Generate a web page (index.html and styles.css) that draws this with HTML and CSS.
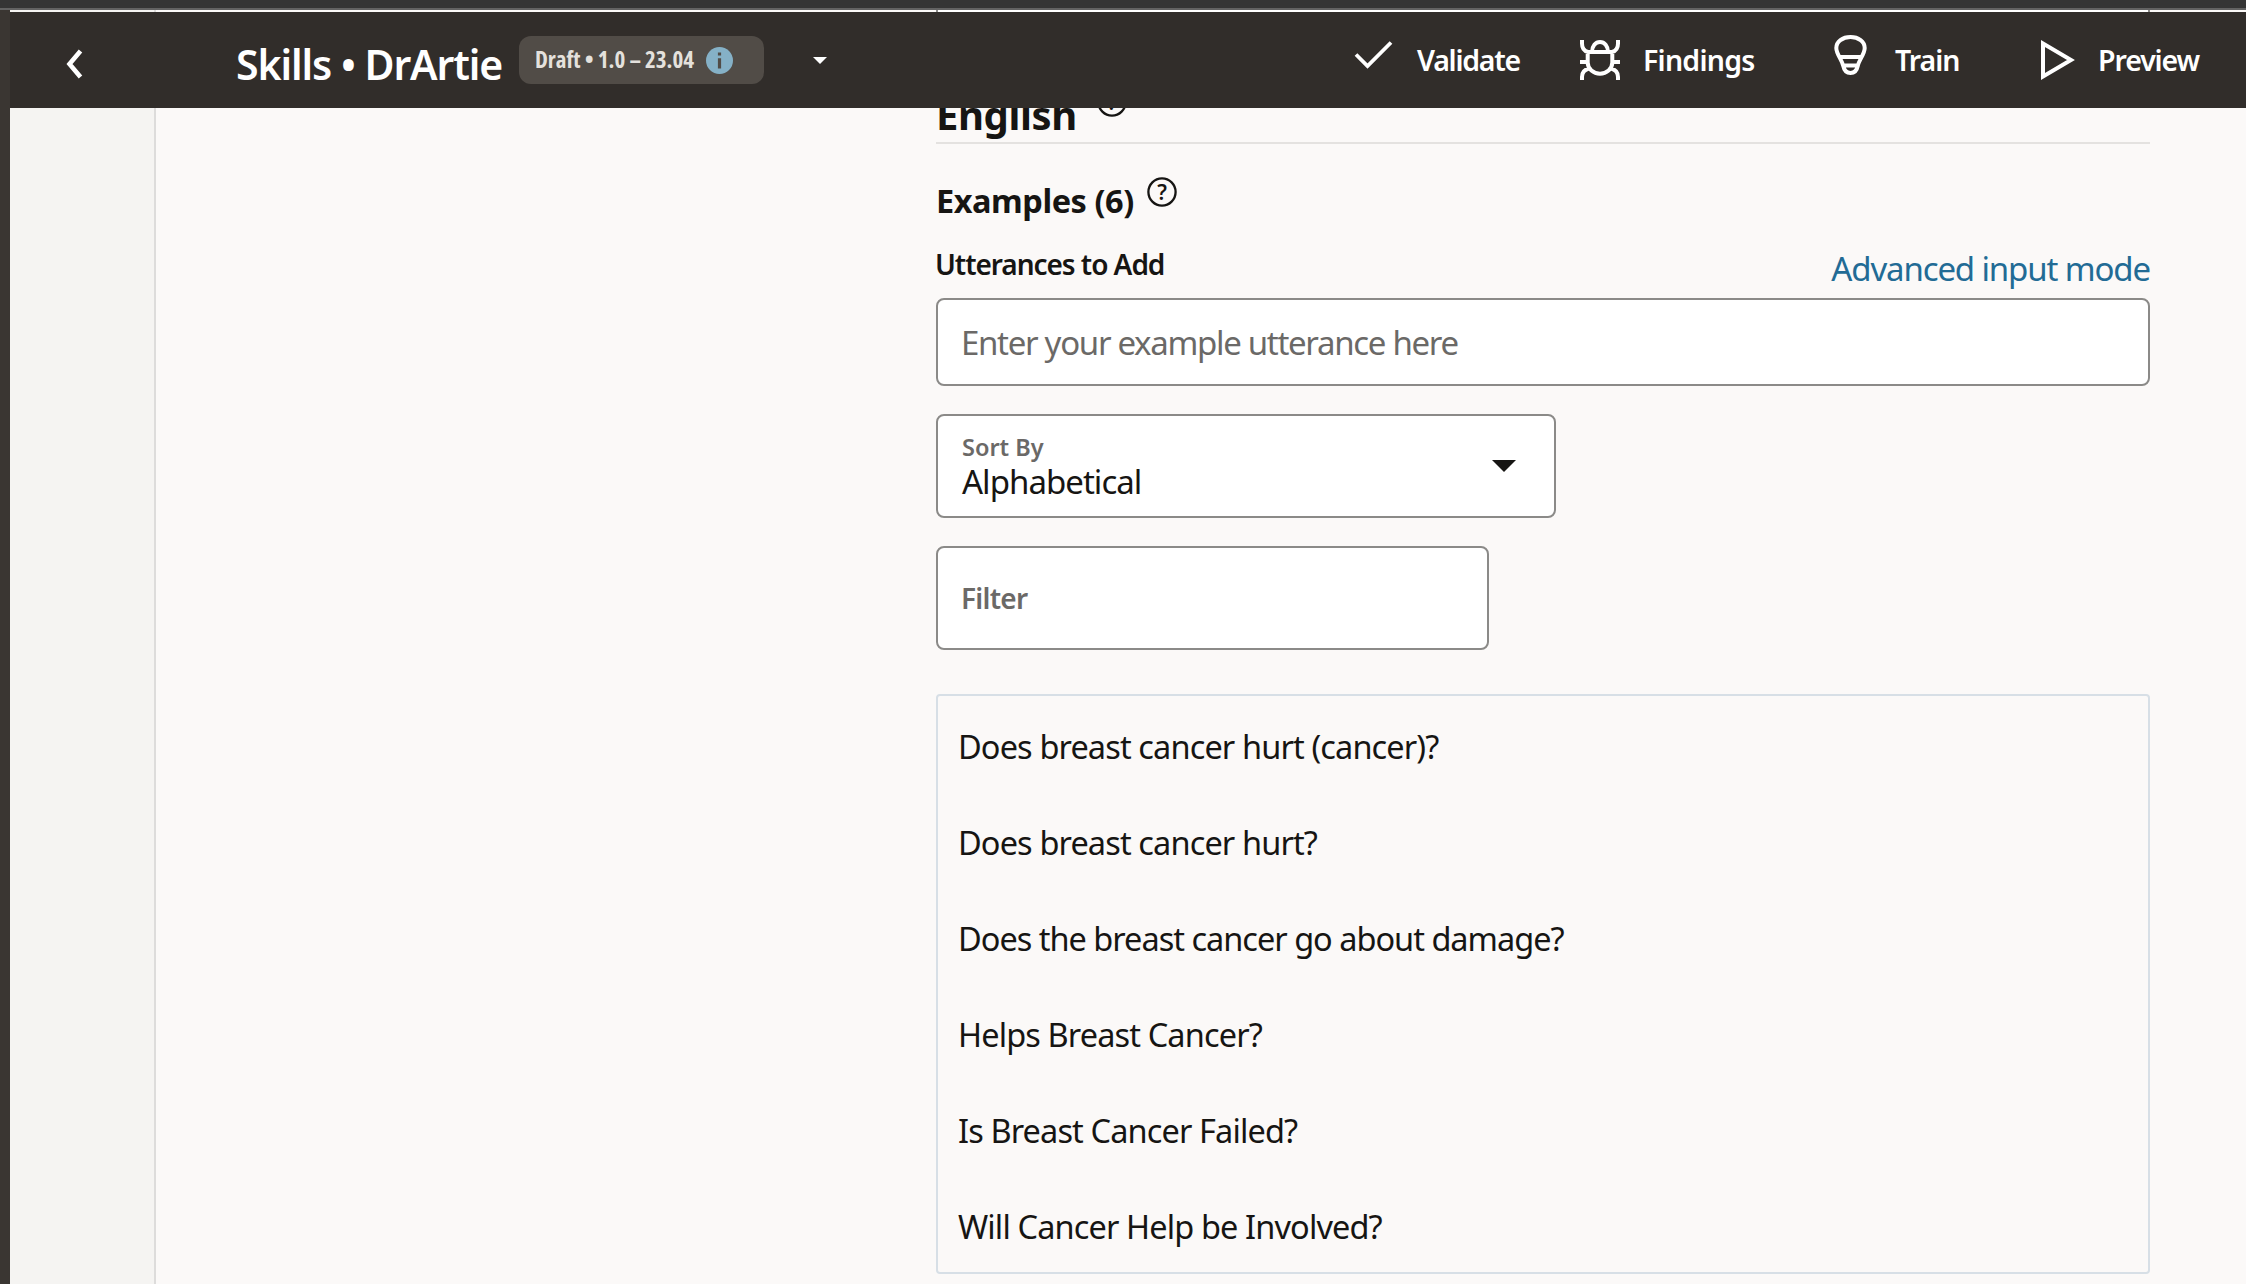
FILE: index.html
```html
<!DOCTYPE html>
<html lang="en">
<head>
<meta charset="utf-8">
<title>Skills • DrArtie</title>
<link rel="stylesheet" href="styles.css">
</head>
<body>
<div class="window-edge"></div>
<div class="app">
  <div class="gutter"></div>
  <aside class="sidebar"></aside>
  <main class="content">
    <div class="description-box"></div>
    <h1 class="language">English
      <svg class="help help-lg" viewBox="0 0 30 30"><circle cx="15" cy="15" r="13.6"/><text x="15" y="22.8">?</text></svg>
    </h1>
    <h2 class="examples">Examples (6)
      <svg class="help" viewBox="0 0 30 30"><circle cx="15" cy="15" r="13.6"/><text x="15" y="22.8">?</text></svg>
    </h2>
    <div class="label-row">
      <span class="field-label">Utterances to Add</span>
      <a class="mode-link">Advanced input mode</a>
    </div>
    <div class="utterance-input">Enter your example utterance here</div>
    <div class="select">
      <div>
        <div class="select-label">Sort By</div>
        <div class="select-value">Alphabetical</div>
      </div>
      <svg class="select-arrow" width="24" height="12" viewBox="0 0 24 12"><path d="M0 0h24L12 12z"/></svg>
    </div>
    <div class="filter">Filter</div>
    <ul class="utterances">
      <li>Does breast cancer hurt (cancer)?</li>
      <li>Does breast cancer hurt?</li>
      <li class="tight">Does the breast cancer go about damage?</li>
      <li>Helps Breast Cancer?</li>
      <li>Is Breast Cancer Failed?</li>
      <li>Will Cancer Help be Involved?</li>
    </ul>
  </main>
</div>
<header class="topbar">
  <svg class="back" width="20" height="32" viewBox="0 0 20 32"><path d="M15.500 3L4.500 16L15.500 29"/></svg>
  <div class="title">Skills • DrArtie</div>
  <div class="pill">Draft • 1.0 – 23.04
    <svg class="info" width="27" height="27" viewBox="0 0 27 27"><circle cx="13.500" cy="13.500" r="13.500"/><path d="M13.500 11.200V21.500M13.500 5.500V8.500"/></svg>
  </div>
  <svg class="caret" width="14" height="7" viewBox="0 0 14 7"><path d="M0 0h14L7 7z"/></svg>
  <nav class="actions">
    <button class="action validate"><svg width="40" height="40" viewBox="0 0 40 40"><path d="M3 14.500L14.500 26L38 2.500"/></svg>Validate</button>
    <button class="action findings"><svg width="40" height="40" viewBox="0 0 40 40"><path d="M7.700 12H32.300V22.500C32.300 29 26.500 33.700 20 33.700S7.700 29 7.700 22.500ZM12 12C12 6 15.500 2 20 2s8 4 8 10M2 0v3.500C2 8.500 4 11 8 12M38 0v3.500C38 8.500 36 11 32 12M0 22h7M33 22h7M2 40V37C2 32.500 5 29.500 9 28.500M38 40V37C38 32.500 35 29.500 31 28.500"/></svg>Findings</button>
    <button class="action train"><svg width="40" height="40" viewBox="0 0 40 40"><path d="M19.500 2C11.500 2 5.300 6.500 5.300 13C5.300 19 11 25 12.300 31C13.200 35.500 15.500 38 19.500 38S25.800 35.500 26.700 31C28 25 33.700 19 33.700 13C33.700 6.500 27.500 2 19.500 2ZM8 22H31M12 30.500H27"/></svg>Train</button>
    <button class="action preview"><svg width="40" height="40" viewBox="0 0 40 40"><path d="M10 3.500V36.500L38 20Z"/></svg>Preview</button>
  </nav>
</header>
</body>
</html>
```
FILE: styles.css
```css
* { box-sizing: border-box; }

body {
  margin: 0;
  height: 1284px;
  overflow: hidden;
  position: relative;
  display: flex;
  flex-direction: column;
  background: #fbf9f8;
  color: #161513;
  font-family: "Noto Sans", "Open Sans", sans-serif;
}

.window-edge {
  height: 10px;
  flex: none;
  background: #353535;
  border-bottom: 2px solid #636363;
}

.app { display: flex; flex: 1; min-height: 0; }
.gutter { width: 10px; background: #3a3632; }
.sidebar { width: 146px; margin-right: 780px; background: #f5f4f2; border-right: 2px solid #dddcdb; }
.content { width: 1214px; }

.description-box {
  height: 2px;
  background: #fff;
  border-left: 2px solid #8b8a88;
  border-right: 2px solid #8b8a88;
}

.topbar {
  position: absolute;
  left: 10px;
  right: 0;
  top: 12px;
  height: 96px;
  display: flex;
  align-items: center;
  background: #312d2a;
  color: #fff;
}
.back { margin-left: 55px; margin-top: 8px; fill: none; stroke: #fff; stroke-width: 4.6; }
.title {
  width: 284px;
  margin-left: 151px;
  padding-top: 8px;
  font-size: 41px;
  font-weight: 600;
  letter-spacing: -1.1px;
  line-height: 56px;
  white-space: nowrap;
}
.pill {
  width: 245px;
  height: 48px;
  margin-left: -1px;
  padding: 0 0 2px 16px;
  display: flex;
  align-items: center;
  gap: 12px;
  border-radius: 12px;
  background: #514c47;
  color: #e4e1dd;
  font: 700 23px "Open Sans", sans-serif;
  font-stretch: 75%;
  white-space: nowrap;
}
.info { position: relative; top: 1px; fill: #85b1c7; }
.info path { stroke: #514c47; stroke-width: 3.2; }
.caret { margin-left: 49px; fill: #fff; }

.actions {
  margin-left: auto;
  width: 893px;
  display: grid;
  grid-template-columns: 225px 253px 202px auto;
}
.action {
  display: flex;
  align-items: center;
  gap: 24px;
  padding: 0;
  border: 0;
  background: none;
  color: #fff;
  font: 600 28.5px/40px "Noto Sans", sans-serif;
  letter-spacing: -1px;
}
.action svg { fill: none; stroke: #fff; stroke-width: 4; overflow: visible; flex: none; }
.validate { letter-spacing: -1.25px; }
.validate svg { stroke-width: 3.8; }
.findings { letter-spacing: -0.75px; gap: 23px; padding-left: 2px; }
.train svg { margin-top: -10px; }
.preview { gap: 25px; letter-spacing: -1.1px; }

/* Form */
.language, .examples { margin: 0; display: flex; font-weight: 700; white-space: nowrap; }
.language {
  height: 58px;
  margin-top: 74px;
  font-size: 40px;
  line-height: 57px;
  letter-spacing: -0.4px;
  border-bottom: 2px solid #e4e2e0;
}
.examples { height: 48px; margin-top: 32px; font-size: 32.5px; line-height: 50px; letter-spacing: -0.45px; }
.help { width: 30px; height: 30px; margin: 1px 0 0 13px; fill: none; stroke: #161513; stroke-width: 2.3; }
.help-lg { margin: 1px 0 0 20px; }
.help text { fill: #161513; stroke: none; font: 600 21px "Noto Sans", sans-serif; text-anchor: middle; letter-spacing: 0; }

.label-row { height: 58px; margin-top: 16px; display: flex; justify-content: space-between; }
.field-label { font-size: 28px; font-weight: 600; line-height: 48px; letter-spacing: -1.05px; margin-left: -1px; }
.mode-link { font-size: 33px; line-height: 58px; letter-spacing: -1.13px; color: #226b95; }

.utterance-input, .select, .filter {
  border: 2px solid #8b8a88;
  border-radius: 8px;
  background: #fff;
  padding: 0 23px;
}
.utterance-input { height: 88px; font-size: 33px; line-height: 86px; letter-spacing: -1.31px; color: #6b6967; }
.select { width: 620px; height: 104px; margin-top: 28px; display: flex; padding: 15px 38px 0 24px; justify-content: space-between; }
.select-label { font-size: 23.5px; font-weight: 600; line-height: 32px; color: #6b6967; }
.select-value { font-size: 33px; line-height: 38px; letter-spacing: -0.97px; }
.select-arrow { margin-top: 29px; fill: #161513; }
.filter { width: 553px; height: 104px; margin-top: 28px; font-size: 28px; font-weight: 600; line-height: 100px; letter-spacing: -0.75px; color: #6b6967; }

.utterances {
  list-style: none;
  margin: 44px 0 0;
  padding: 27px 20px 21px;
  border: 2px solid #d7dfe6;
  border-radius: 4px;
  display: grid;
  gap: 48px;
  font-size: 32.5px;
  line-height: 48px;
  letter-spacing: -0.87px;
}
.tight { letter-spacing: -1px; }
```
